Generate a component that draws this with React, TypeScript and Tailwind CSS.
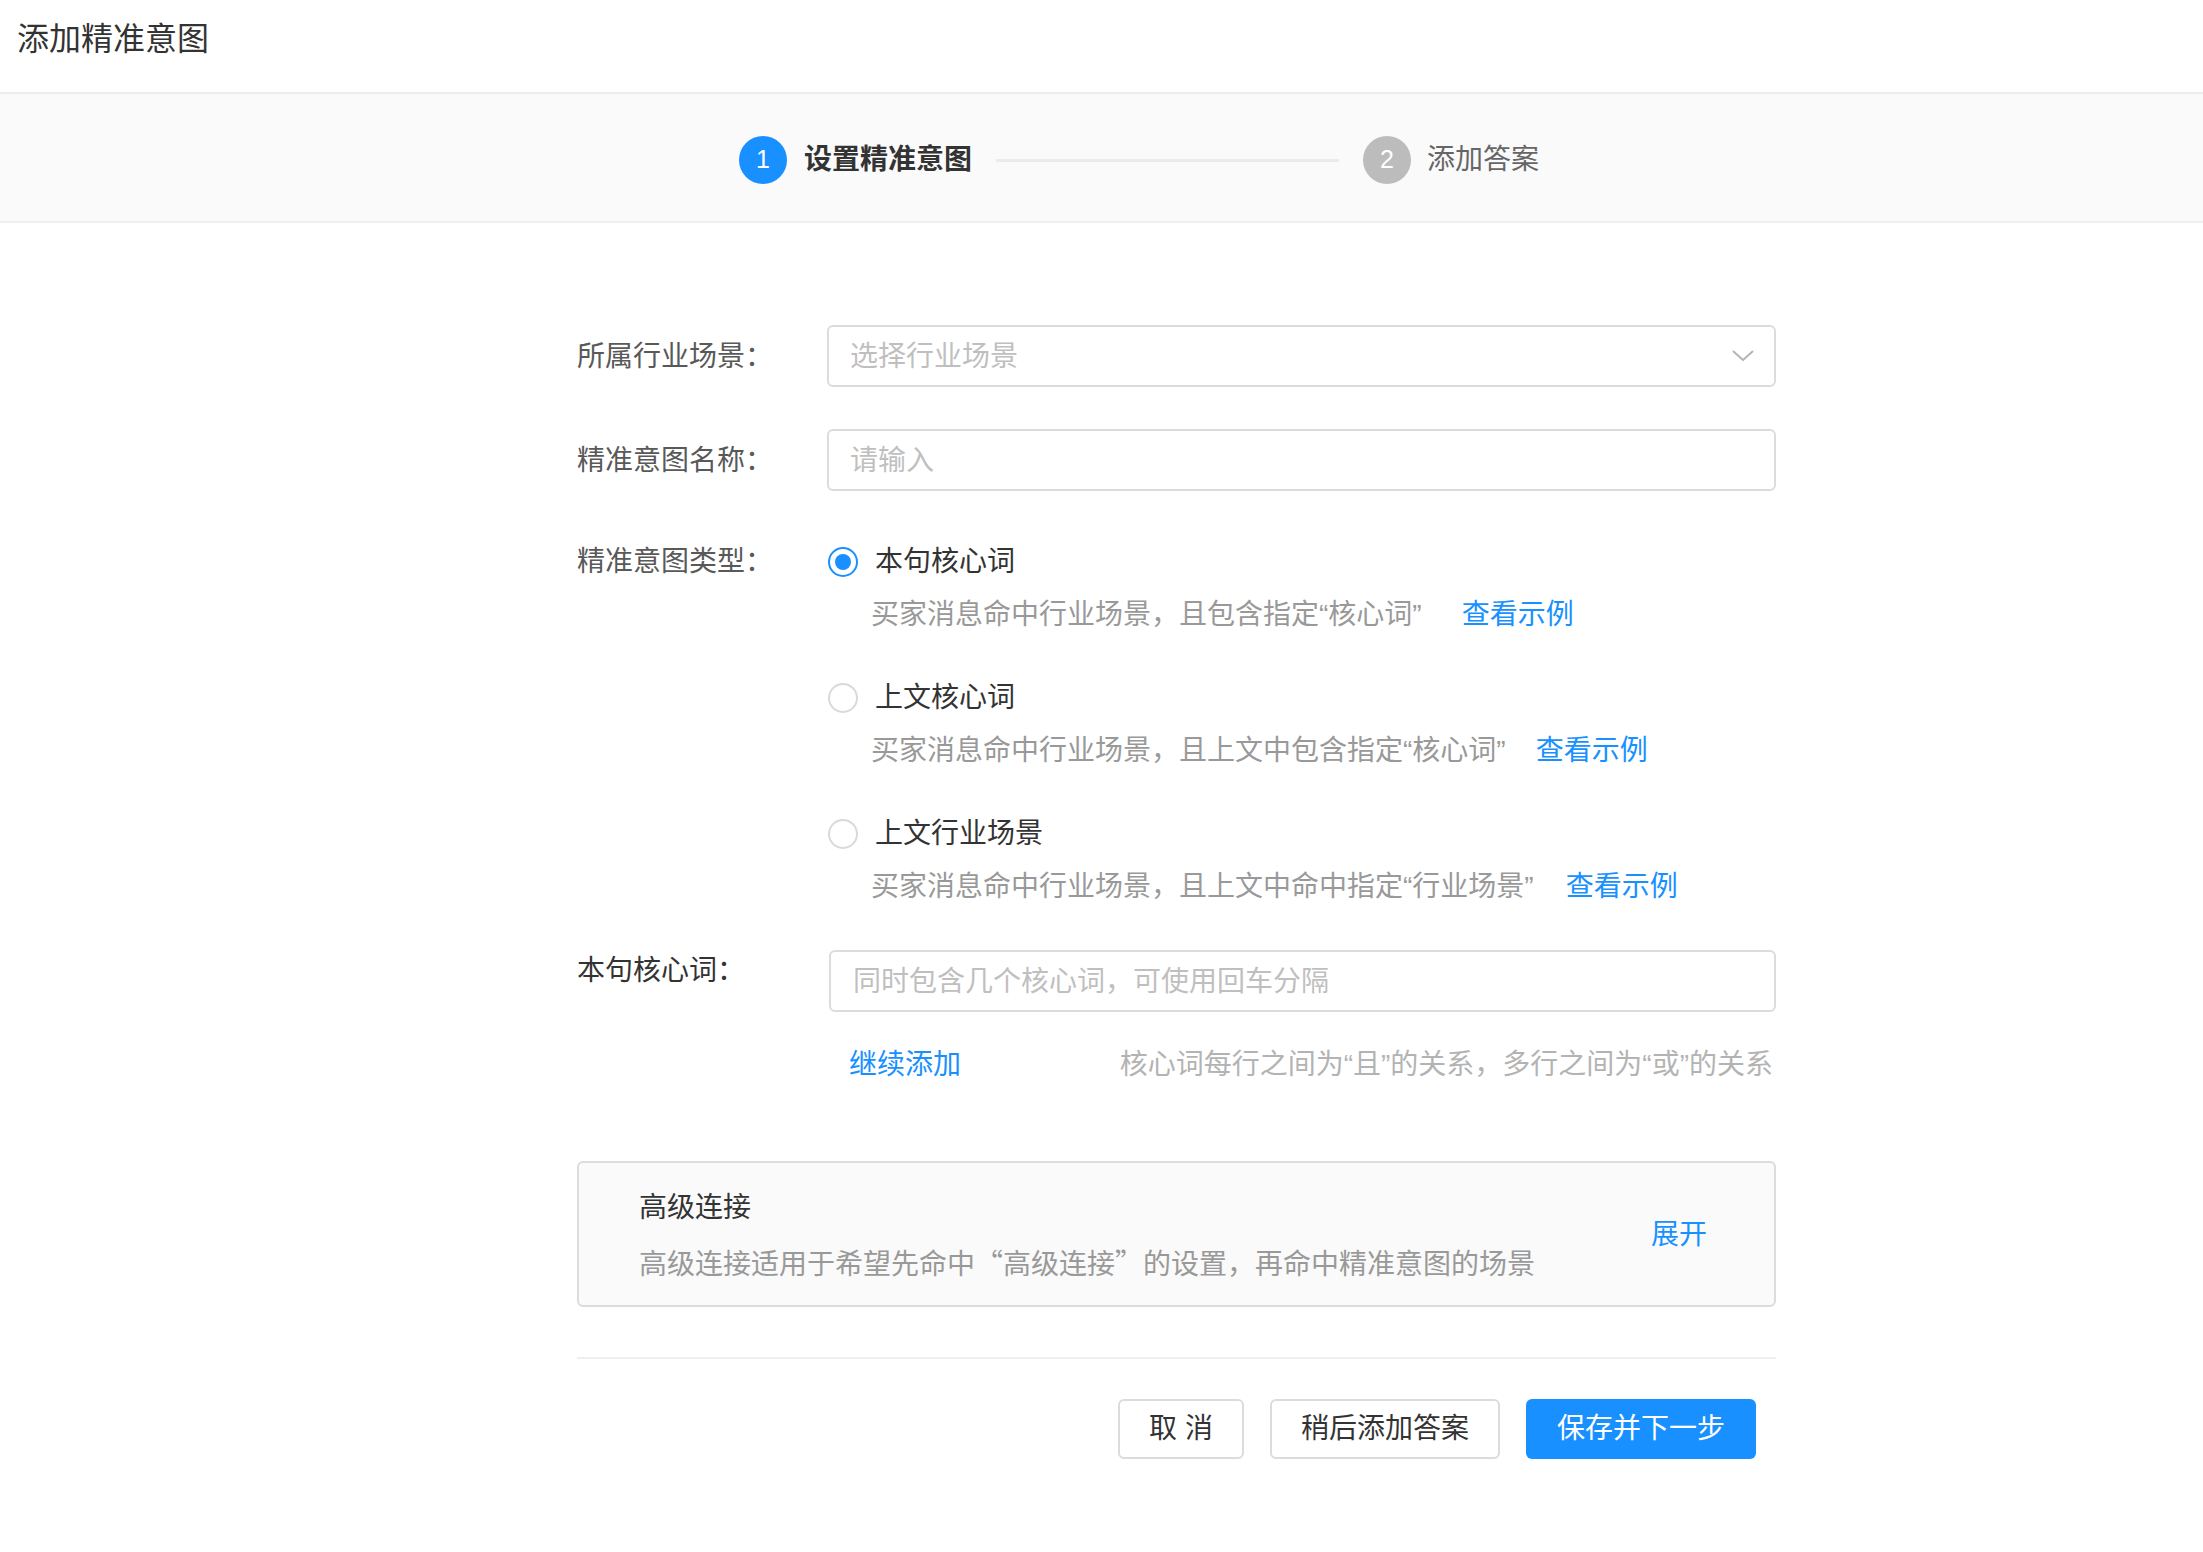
import React from "react";

const FONT = { fontFamily: '"Liberation Sans", "Noto Sans CJK SC", sans-serif' };

function Radio({ checked }: { checked?: boolean }) {
  return checked ? (
    <span className="flex h-[30px] w-[30px] shrink-0 items-center justify-center rounded-full border-[2px] border-[#1890ff] bg-white">
      <span className="block h-[16px] w-[16px] rounded-full bg-[#1890ff]" />
    </span>
  ) : (
    <span className="block h-[30px] w-[30px] shrink-0 rounded-full border-[2px] border-[#d9d9d9] bg-white" />
  );
}

function Option({
  checked,
  label,
  desc,
  gap,
  first,
}: {
  checked?: boolean;
  label: string;
  desc: React.ReactNode;
  gap: string;
  first?: boolean;
}) {
  return (
    <div className={first ? "" : "mt-[43px]"}>
      <div className="flex h-[40px] items-center">
        <span className="ml-[1px] block">
          <Radio checked={checked} />
        </span>
        <span className="ml-[17px] text-[28px] leading-[40px] text-[#333]">{label}</span>
      </div>
      <div className="mt-[13px] flex h-[40px] items-center pl-[44px] text-[28px] leading-[40px]">
        <span className="text-[#999]">{desc}</span>
        <span className={"text-[#1890ff] " + gap}>查看示例</span>
      </div>
    </div>
  );
}

export default function App() {
  return (
    <div className="min-h-screen w-full bg-white" style={FONT}>
      <header className="flex h-[94px] items-center border-b-[2px] border-[#ececec] pb-[14px] pl-[17px] text-[32px] text-[#333]">
        添加精准意图
      </header>

      <div className="flex h-[129px] items-center border-b-[2px] border-[#efefef] bg-[#fafafa] pl-[739px] pt-[5px]">
        <span className="flex h-[48px] w-[48px] items-center justify-center rounded-full bg-[#1890ff] text-[25px] text-white">
          1
        </span>
        <span className="ml-[17px] text-[28px] font-bold text-[#333]">设置精准意图</span>
        <span className="ml-[24px] block h-[3px] w-[343px] bg-[#ebebeb]" />
        <span className="ml-[24px] flex h-[48px] w-[48px] items-center justify-center rounded-full bg-[#bcbcbc] text-[25px] text-white">
          2
        </span>
        <span className="ml-[16px] text-[28px] text-[#666]">添加答案</span>
      </div>

      <main className="ml-[577px] w-[1199px] pt-[102px]">
        {/* row 1 */}
        <div className="flex items-center">
          <label className="w-[250px] shrink-0 pt-[2px] text-[28px] text-[#595959]">所属行业场景：</label>
          <div className="flex h-[62px] flex-1 items-center justify-between rounded-[6px] border-[2px] border-[#dcdcdc] pl-[21px] pr-[20px]">
            <span className="pt-[2px] text-[28px] text-[#bfbfbf]">选择行业场景</span>
            <svg width="22" height="12" viewBox="0 0 22 12" fill="none">
              <path d="M1.5 1.5 L11 10 L20.5 1.5" stroke="#b5b5b5" strokeWidth="2" strokeLinecap="round" strokeLinejoin="round" />
            </svg>
          </div>
        </div>

        {/* row 2 */}
        <div className="mt-[42px] flex items-center">
          <label className="w-[250px] shrink-0 pt-[2px] text-[28px] text-[#595959]">精准意图名称：</label>
          <div className="flex h-[62px] flex-1 items-center rounded-[6px] border-[2px] border-[#dcdcdc] pl-[21px]">
            <span className="pt-[2px] text-[28px] text-[#bfbfbf]">请输入</span>
          </div>
        </div>

        {/* row 3 */}
        <div className="mt-[51px] flex">
          <label className="flex h-[40px] w-[250px] shrink-0 items-center text-[28px] text-[#595959]">
            精准意图类型：
          </label>
          <div className="flex-1">
            <Option
              first
              checked
              label="本句核心词"
              desc={<>买家消息命中行业场景，且包含指定“核心词”</>}
              gap="ml-[40px]"
            />
            <Option
              label="上文核心词"
              desc={<>买家消息命中行业场景，且上文中包含指定“核心词”</>}
              gap="ml-[30px]"
            />
            <Option
              label="上文行业场景"
              desc={<>买家消息命中行业场景，且上文中命中指定“行业场景”</>}
              gap="ml-[32px]"
            />
          </div>
        </div>

        {/* row 4 */}
        <div className="mt-[43px] flex">
          <label className="flex h-[40px] w-[252px] shrink-0 items-center pt-[2px] text-[28px] text-[#333]">本句核心词：</label>
          <div className="flex h-[62px] flex-1 items-center rounded-[6px] border-[2px] border-[#dcdcdc] pl-[22px]">
            <span className="pt-[2px] text-[28px] text-[#bfbfbf]">同时包含几个核心词，可使用回车分隔</span>
          </div>
        </div>

        <div className="mt-[33px] flex h-[40px] items-center justify-between pl-[272px] pr-[3px] text-[28px]">
          <span className="text-[#1890ff]">继续添加</span>
          <span className="text-[#b3b3b3]">核心词每行之间为“且”的关系，多行之间为“或”的关系</span>
        </div>

        {/* advanced */}
        <div className="mt-[76px] flex h-[146px] items-center justify-between rounded-[6px] border-[2px] border-[#dcdcdc] bg-[#fafafa] pl-[60px] pr-[67px]">
          <div className="pt-[4px]">
            <div className="text-[28px] leading-[40px] text-[#333]">高级连接</div>
            <div className="mt-[14px] text-[28px] leading-[40px] text-[#999]">
              高级连接适用于希望先命中
              <span style={{ fontFamily: '"Noto Sans CJK SC", sans-serif' }}>“高级连接”</span>
              的设置，再命中精准意图的场景
            </div>
          </div>
          <span className="pt-[2px] text-[28px] text-[#1890ff]">展开</span>
        </div>

        <div className="mt-[50px] h-[2px] w-full bg-[#efefef]" />

        <div className="mt-[40px] flex justify-end gap-[26px] pr-[20px]">
          <button className="flex h-[60px] w-[126px] items-center justify-center rounded-[6px] border-[2px] border-[#dcdcdc] bg-white text-[28px] text-[#333]">
            取 消
          </button>
          <button className="flex h-[60px] w-[230px] items-center justify-center rounded-[6px] border-[2px] border-[#dcdcdc] bg-white text-[28px] text-[#333]">
            稍后添加答案
          </button>
          <button className="flex h-[60px] w-[230px] items-center justify-center rounded-[6px] bg-[#1890ff] text-[28px] text-white">
            保存并下一步
          </button>
        </div>
      </main>
    </div>
  );
}
